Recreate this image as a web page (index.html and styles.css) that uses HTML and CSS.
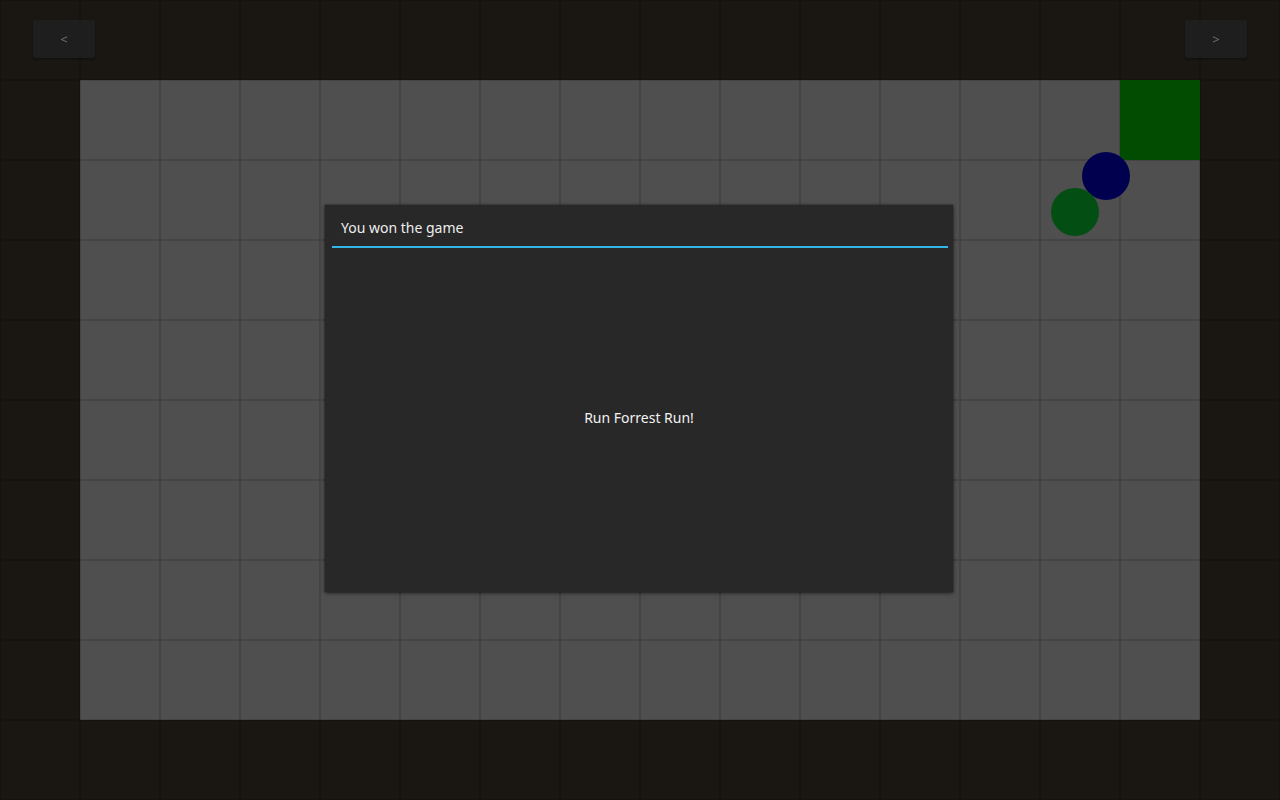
FILE: index.html
```html
<!DOCTYPE html>
<html>
<head>
<meta charset="utf-8">
<link rel="stylesheet" href="styles.css">
</head>
<body>
<div class="screen">
  <div class="topbar">
    <button class="nav">&lt;</button>
    <button class="nav">&gt;</button>
  </div>
  <div class="board">
    <div class="goal"></div>
    <div class="token blue"></div>
    <div class="token green"></div>
    <div class="dialog">
      <div class="dialog-title">You won the game</div>
      <div class="dialog-divider"></div>
      <div class="dialog-body">Run Forrest Run!</div>
    </div>
  </div>
</div>
</body>
</html>
```

FILE: styles.css
```css
html, body {
  margin: 0;
  padding: 0;
}
body {
  width: 1280px;
  height: 800px;
  overflow: hidden;
  font-family: "Noto Sans", "Open Sans", sans-serif;
}
.screen {
  width: 1280px;
  height: 800px;
  background-color: #1a1713;
  background-image:
    linear-gradient(to right, #15130f 0 1px, transparent 1px 79px, #15130f 79px 80px),
    linear-gradient(to bottom, #15130f 0 1px, transparent 1px 79px, #15130f 79px 80px);
  background-size: 80px 80px;
  display: flex;
  flex-direction: column;
}
.topbar {
  height: 80px;
  box-sizing: border-box;
  padding: 20px 33px 0 33px;
  display: flex;
  justify-content: space-between;
  align-items: flex-start;
}
.nav {
  width: 62px;
  height: 38px;
  border: none;
  border-radius: 2px;
  background: #1e1e1e;
  color: #707070;
  font-family: "Noto Sans", sans-serif;
  font-size: 13px;
  box-shadow: 0 1px 2px rgba(0,0,0,0.35);
  padding: 0;
}
.board {
  position: relative;
  margin-left: 80px;
  width: 1120px;
  height: 640px;
  background-color: #4f4f4f;
  background-image:
    linear-gradient(to right, #444444 0 1px, transparent 1px 79px, #444444 79px 80px),
    linear-gradient(to bottom, #444444 0 1px, transparent 1px 79px, #444444 79px 80px);
  background-size: 80px 80px;
}
.goal {
  position: absolute;
  left: 1040px;
  top: 0;
  width: 80px;
  height: 80px;
  background: #024c02;
}
.token {
  position: absolute;
  width: 48px;
  height: 48px;
  border-radius: 50%;
}
.token.blue {
  left: 1002px;
  top: 72px;
  background: #00004f;
}
.token.green {
  left: 971px;
  top: 108px;
  background: #034f13;
}
.dialog {
  position: absolute;
  left: 245px;
  top: 125px;
  width: 628px;
  height: 387px;
  background: #282828;
  box-shadow: 0 1px 4px rgba(0,0,0,0.6), 0 0 1px rgba(0,0,0,0.8);
  display: flex;
  flex-direction: column;
}
.dialog-title {
  height: 41px;
  box-sizing: border-box;
  padding: 13px 0 0 16px;
  color: #eeeeee;
  font-size: 14px;
  line-height: 20px;
}
.dialog-divider {
  height: 2px;
  margin: 0 5px 0 7px;
  background: #33b5e5;
}
.dialog-body {
  flex: 1;
  display: flex;
  align-items: center;
  justify-content: center;
  color: #f2f2f2;
  font-size: 14px;
  padding-bottom: 6px;
}
```
